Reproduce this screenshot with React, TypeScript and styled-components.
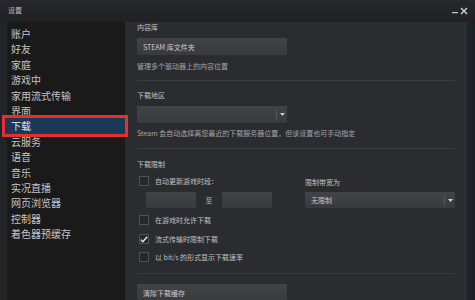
import React from 'react';
import styled, {createGlobalStyle} from 'styled-components';

const GlobalStyle = createGlobalStyle`
  html, body {
    margin: 0;
    padding: 0;
    background: #222428;
  }
  body {
    font-family: "Noto Sans CJK SC", "Noto Sans", sans-serif;
  }
`;

const navItems = [
  '账户',
  '好友',
  '家庭',
  '游戏中',
  '家用流式传输',
  '界面',
  '下载',
  '云服务',
  '语音',
  '音乐',
  '实况直播',
  '网页浏览器',
  '控制器',
  '着色器预缓存',
];

const Window = styled.div`
  width: 475px;
  height: 300px;
  display: flex;
  flex-direction: column;
  background: #222428;
  overflow: hidden;
`;

const TitleBar = styled.div`
  height: 22px;
  flex: none;
  display: flex;
  align-items: center;
  justify-content: space-between;
  padding: 0 7px 2px 8px;
  box-sizing: border-box;
  background: linear-gradient(#25272c, #1f2125);
`;

const Title = styled.span`
  font-size: 7px;
  line-height: 10px;
  color: #b9bcc2;
`;

const Controls = styled.div`
  display: flex;
  align-items: center;
  gap: 2px;
  margin-top: 1px;
`;

const Body = styled.div`
  flex: 1;
  display: flex;
  padding-left: 7px;
  min-height: 0;
`;

const Sidebar = styled.ul`
  width: 118px;
  flex: none;
  margin: 0;
  padding: 4px 0 0;
  list-style: none;
  background: #1a1a1b;
`;

const NavItem = styled.li<{$active?: boolean}>`
  height: 15.4px;
  line-height: 15.4px;
  font-size: 10px;
  color: ${p => (p.$active ? '#e6e9ee' : '#c4c5c7')};
  padding-left: ${p => (p.$active ? '6px' : '4px')};
  margin-left: ${p => (p.$active ? '-2px' : '0')};
  background: ${p => (p.$active ? '#1c3858' : 'transparent')};
  outline: ${p => (p.$active ? '3px solid #e4302e' : 'none')};
  position: relative;
  white-space: nowrap;
`;

const Content = styled.div`
  flex: 1;
  display: flex;
  flex-direction: column;
  padding: 0 10px 0 12px;
  background: #2b2c2f;
  border-right: 1px solid #35373b;
  min-width: 0;
`;

const RightStrip = styled.div`
  width: 9px;
  flex: none;
  background: linear-gradient(90deg, #23262b, #1c1f24);
`;

const Label = styled.div<{$mt?: number}>`
  font-size: 7px;
  line-height: 10px;
  height: 10px;
  color: #c1c2c4;
  margin-top: ${p => p.$mt ?? 0}px;
  white-space: nowrap;
`;

const Hint = styled(Label)`
  color: #a4a5a8;
`;

const Field = styled.div<{$w?: number; $h?: number; $mt?: number}>`
  width: ${p => p.$w ?? 150}px;
  height: ${p => p.$h ?? 17}px;
  margin-top: ${p => p.$mt ?? 0}px;
  flex: none;
  box-sizing: border-box;
  display: flex;
  align-items: center;
  padding-left: 6px;
  font-size: 7px;
  color: #c9cacc;
  background: linear-gradient(#424346, #393a3d);
  white-space: nowrap;
`;

const FieldText = styled.span`
  flex: 1;
`;

const ArrowBox = styled.div`
  width: 11px;
  height: 100%;
  display: flex;
  align-items: center;
  justify-content: center;
  border-left: 1px solid #545559;
  box-sizing: border-box;
  height: 11px;
`;

const Divider = styled.div<{$mt: number}>`
  height: 1px;
  width: 318px;
  margin-top: ${p => p.$mt}px;
  background: #3a3b3f;
  flex: none;
`;

const LimitGrid = styled.div`
  display: grid;
  grid-template-columns: 168px 150px;
  margin-top: 7px;
`;

const Column = styled.div`
  display: flex;
  flex-direction: column;
`;

const TimeRow = styled.div`
  display: flex;
  align-items: center;
  margin-top: 6px;
  padding-left: 9px;
`;

const To = styled.span`
  width: 26px;
  text-align: center;
  font-size: 7px;
  color: #b9babc;
`;

const CheckRow = styled.div<{$mt?: number}>`
  display: flex;
  align-items: center;
  height: 10px;
  margin-top: ${p => p.$mt ?? 0}px;
  padding-left: 2px;
  font-size: 7px;
  color: #bfc0c2;
  white-space: nowrap;
`;

const Box = styled.span`
  width: 10px;
  height: 10px;
  box-sizing: border-box;
  border: 1px solid #505155;
  background: #27282b;
  margin-right: 6px;
  display: flex;
  align-items: center;
  justify-content: center;
  flex: none;
`;

const Arrow = () => (
  <svg width="5" height="3" viewBox="0 0 5 3">
    <path d="M0 0h5L2.5 3z" fill="#d0d1d3" />
  </svg>
);

const Check = ({label, checked, mt}: {label: string; checked?: boolean; mt?: number}) => (
  <CheckRow $mt={mt}>
    <Box>
      {checked && (
        <svg width="8" height="7" viewBox="0 0 8 7">
          <path d="M0.8 3.6l2 2.2L7.2 0.8" stroke="#e8e8e8" strokeWidth="1.4" fill="none" />
        </svg>
      )}
    </Box>
    {label}
  </CheckRow>
);

export default function App() {
  return (
    <Window>
      <GlobalStyle />
      <TitleBar>
        <Title>设置</Title>
        <Controls>
          <svg width="6" height="7" viewBox="0 0 6 7">
            <rect x="0" y="5" width="6" height="1.2" fill="#c9cbd0" />
          </svg>
          <svg width="8" height="8" viewBox="0 0 8 8">
            <path d="M1 1l6 6M7 1L1 7" stroke="#c9cbd0" strokeWidth="1.5" />
          </svg>
        </Controls>
      </TitleBar>
      <Body>
        <Sidebar>
          {navItems.map(item => (
            <NavItem key={item} $active={item === '下载'}>
              {item}
            </NavItem>
          ))}
        </Sidebar>
        <Content>
          <Label>内容库</Label>
          <Field $mt={6}>STEAM 库文件夹</Field>
          <Hint $mt={6}>管理多个驱动器上的内容位置</Hint>
          <Divider $mt={9} />
          <Label $mt={9}>下载地区</Label>
          <Field $mt={6}>
            <FieldText />
            <ArrowBox>
              <Arrow />
            </ArrowBox>
          </Field>
          <Hint $mt={5}>Steam 会自动选择离您最近的下载服务器位置，但该设置也可手动指定</Hint>
          <Divider $mt={10} />
          <Label $mt={10}>下载限制</Label>
          <LimitGrid>
            <Column>
              <Check label="自动更新游戏时段：" />
              <TimeRow>
                <Field $w={50} $h={16} />
                <To>至</To>
                <Field $w={50} $h={16} />
              </TimeRow>
            </Column>
            <Column>
              <Label $mt={1}>限制带宽为</Label>
              <Field $h={16} $mt={5}>
                <FieldText>无限制</FieldText>
                <ArrowBox>
                  <Arrow />
                </ArrowBox>
              </Field>
            </Column>
          </LimitGrid>
          <Check label="在游戏时允许下载" mt={7} />
          <Check label="流式传输时限制下载" checked mt={9} />
          <Check label="以 bit/s 的形式显示下载速率" mt={8} />
          <Divider $mt={11} />
          <Field $mt={10}>清除下载缓存</Field>
        </Content>
        <RightStrip />
      </Body>
    </Window>
  );
}
